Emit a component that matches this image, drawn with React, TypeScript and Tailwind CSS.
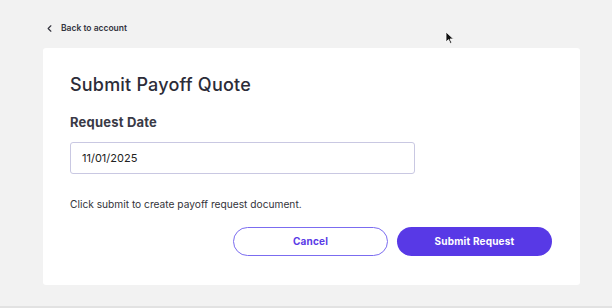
import { ChevronLeft } from "lucide-react";

const App = () => {
  return (
    <div className="relative w-[612px] h-[308px] bg-[#f2f2f2] overflow-hidden font-['Inter',sans-serif] border-b-2 border-[#e2e2e2]">
      <div className="pl-[44px] mt-[21px] h-[14px] flex items-center gap-[6px] text-[#33333d]">
        <ChevronLeft className="w-[11px] h-[11px]" strokeWidth={2.5} />
        <span className="text-[8.5px] font-semibold">Back to account</span>
      </div>

      <section className="ml-[43px] mt-[13px] w-[537px] h-[237px] bg-white rounded-[3px] pl-[27px] pr-[28px] pt-[25px]">
        <h1 className="text-[18px] leading-[24px] font-medium text-[#2c2c38] tracking-[0.2px]">
          Submit Payoff Quote
        </h1>
        <h2 className="mt-[17px] text-[13px] leading-[16px] font-bold text-[#3a3a46] tracking-[0.2px]">
          Request Date
        </h2>
        <div className="mt-[12px] w-[345px] h-[32px] border border-[#c9c8e2] rounded-[3px] flex items-center pl-[11px] text-[11px] text-[#222]">
          11/01/2025
        </div>
        <p className="mt-[23px] text-[10.2px] text-[#33333a]">
          Click submit to create payoff request document.
        </p>
        <div className="mt-[15px] flex justify-end gap-[9px]">
          <button className="w-[155px] h-[29px] rounded-full border border-[#7b6cf0] text-[#5a3be6] text-[10px] font-bold bg-white tracking-[0.2px]">
            Cancel
          </button>
          <button className="w-[155px] h-[29px] rounded-full bg-[#5839e6] text-white text-[10px] font-bold tracking-[0.2px]">
            Submit Request
          </button>
        </div>
      </section>

      <svg className="absolute left-[445px] top-[31px]" width="10" height="14" viewBox="0 0 10 14">
        <path d="M1 1 L1 11 L3.5 8.6 L5.3 12.5 L6.8 11.8 L5 8 L8.5 8 Z" fill="#111" stroke="#fff" strokeWidth="0.8" />
      </svg>
    </div>
  );
};

export default App;
